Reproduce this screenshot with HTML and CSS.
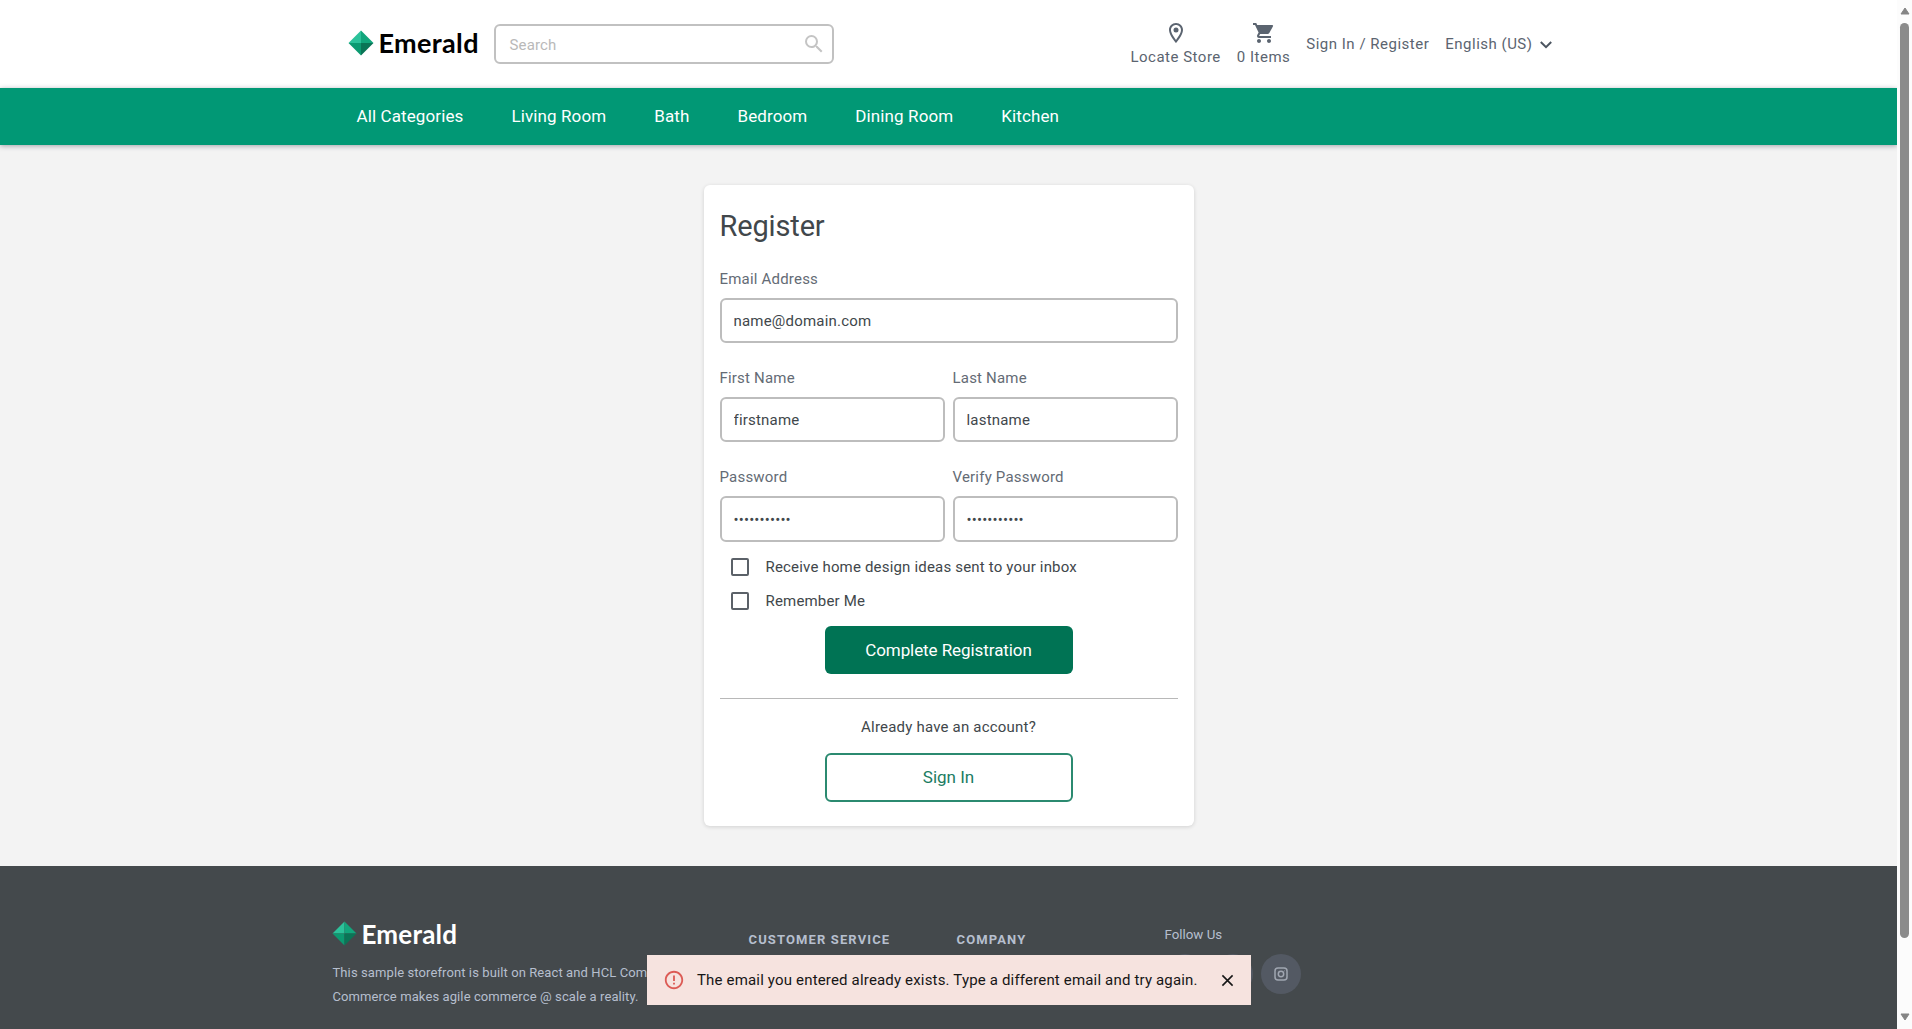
FILE: index.html
```html
<!DOCTYPE html>
<html lang="en">
<head>
<meta charset="utf-8">
<title>Register - Emerald</title>
<link rel="stylesheet" href="styles.css">
</head>
<body>
<div class="viewport">
  <div class="page">
    <header class="header">
      <div class="header-inner">
        <a class="logo">
          <svg class="gem" viewBox="0 0 26 26"><path fill="#2cc29a" d="M13 0.5V13H0.5Z"/><path fill="#12a67c" d="M13 0.5V13H25.5Z"/><path fill="#0c9a71" d="M0.5 13H13V25.5Z"/><path fill="#0a7556" d="M25.5 13H13V25.5Z"/></svg>
          <span class="wordmark">Emerald</span>
        </a>
        <div class="search">
          <span>Search</span>
          <svg class="icon" viewBox="0 0 24 24"><path d="M15.5 14h-.79l-.28-.27A6.471 6.471 0 0 0 16 9.5 6.5 6.5 0 1 0 9.5 16c1.61 0 3.09-.59 4.23-1.57l.27.28v.79l5 4.99L20.49 19l-4.99-5zm-6 0C7.01 14 5 11.99 5 9.5S7.01 5 9.5 5 14 7.01 14 9.5 11.99 14 9.5 14z"/></svg>
        </div>
        <div class="tools">
          <a class="tool"><svg class="icon" viewBox="0 0 24 24"><path d="M12 2C8.13 2 5 5.13 5 9c0 5.25 7 13 7 13s7-7.75 7-13c0-3.87-3.13-7-7-7zM7 9c0-2.76 2.24-5 5-5s5 2.24 5 5c0 2.88-2.88 7.19-5 9.88C9.92 16.21 7 11.85 7 9z"/><circle cx="12" cy="9" r="2.5"/></svg><span>Locate Store</span></a>
          <a class="tool"><svg class="icon" viewBox="0 0 24 24"><path d="M7 18c-1.1 0-1.99.9-1.99 2S5.9 22 7 22s2-.9 2-2-.9-2-2-2zM1 2v2h2l3.600 7.590-1.350 2.450c-.16.28-.25.61-.25.960 0 1.100.9 2 2 2h12v-2H7.420c-.14 0-.25-.11-.25-.25l.03-.12.9-1.630h7.450c.75 0 1.410-.41 1.750-1.030l3.580-6.490A1 1 0 0 0 20 4H5.210l-.94-2H1zm16 16c-1.100 0-1.990.9-1.990 2s.89 2 1.990 2 2-.9 2-2-.9-2-2-2z"/></svg><span>0 Items</span></a>
          <a class="signin">Sign In / Register</a>
          <a class="language">English (US)<svg class="chevron" viewBox="0 0 14 10"><path d="M1.800 2L7 7.200L12.200 2"/></svg></a>
        </div>
      </div>
    </header>
    <nav class="nav">
      <div class="nav-inner"><a>All Categories</a><a>Living Room</a><a>Bath</a><a>Bedroom</a><a>Dining Room</a><a>Kitchen</a></div>
    </nav>
    <main class="main">
      <form class="card">
        <h1>Register</h1>
        <div class="fields">
          <label class="field wide"><span>Email Address</span><input type="text" value="name@domain.com"></label>
          <label class="field"><span>First Name</span><input type="text" value="firstname"></label>
          <label class="field"><span>Last Name</span><input type="text" value="lastname"></label>
          <label class="field"><span>Password</span><input class="secret" type="password" value="password123"></label>
          <label class="field"><span>Verify Password</span><input class="secret" type="password" value="password123"></label>
        </div>
        <div class="checks">
          <label class="check"><span class="box"></span>Receive home design ideas sent to your inbox</label>
          <label class="check"><span class="box"></span>Remember Me</label>
        </div>
        <button class="button primary" type="button">Complete Registration</button>
        <hr>
        <p class="account">Already have an account?</p>
        <button class="button outline" type="button">Sign In</button>
      </form>
    </main>
    <footer class="footer">
      <div class="footer-inner">
        <div class="about">
          <a class="logo light">
            <svg class="gem" viewBox="0 0 26 26"><path fill="#2cc29a" d="M13 0.5V13H0.5Z"/><path fill="#12a67c" d="M13 0.5V13H25.5Z"/><path fill="#0c9a71" d="M0.5 13H13V25.5Z"/><path fill="#0a7556" d="M25.5 13H13V25.5Z"/></svg>
            <span class="wordmark">Emerald</span>
          </a>
          <p>This sample storefront is built on React and HCL Commerce.<br>Commerce makes agile commerce @ scale a reality.</p>
        </div>
        <h2>Customer Service</h2>
        <h2>Company</h2>
        <div class="follow">
          <span>Follow Us</span>
          <div class="social">
            <a></a><a></a>
            <a><svg viewBox="0 0 14 14"><rect x="1" y="1" width="12" height="12" rx="3"/><circle cx="7" cy="7" r="2.700"/><path d="M10.200 3.700h.4"/></svg></a>
          </div>
        </div>
      </div>
    </footer>
  </div>
  <div class="scrollbar">
    <svg viewBox="0 0 10 8"><path d="M5 1L9 7H1Z"/></svg>
    <div class="thumb"></div>
    <svg class="down" viewBox="0 0 10 8"><path d="M1 1H9L5 7Z"/></svg>
  </div>
  <div class="toast">
    <svg class="alert" viewBox="0 0 24 24"><path d="M11 15h2v2h-2zm0-8h2v6h-2zm.99-5C6.470 2 2 6.480 2 12s4.470 10 9.990 10C17.520 22 22 17.520 22 12S17.520 2 11.990 2zM12 20c-4.420 0-8-3.580-8-8s3.580-8 8-8 8 3.580 8 8-3.580 8-8 8z"/></svg>
    <span>The email you entered already exists. Type a different email and try again.</span>
    <svg class="close" viewBox="0 0 14 14"><path d="M1.500 1.500L12.500 12.500M12.500 1.500L1.500 12.500"/></svg>
  </div>
</div>
</body>
</html>
```
FILE: styles.css
```css
* { box-sizing: border-box; }
body { margin: 0; font-family: Roboto, sans-serif; font-size: 15px; color: #41474b; overflow: hidden; }
h1, h2, p { margin: 0; font-weight: 400; }
.viewport { position: relative; display: flex; width: 1912px; height: 1029px; overflow: hidden; }
.page { width: 1897px; height: 1029px; background: #f3f3f3; overflow: hidden; }

.header { height: 88px; background: #fff; color: #5b6470; }
.header-inner { width: 1232px; margin: 0 auto; padding: 0 12px 0 16px; display: flex; align-items: center; height: 88px; }
.logo { display: flex; align-items: center; gap: 5px; width: 145px; height: 30px; }
.gem { width: 26px; height: 26px; flex: none; margin: -3px 0 0 -1px; }
.wordmark { font: 700 27px/30px Lato, sans-serif; color: #000; letter-spacing: 0.35px; margin-top: -2px; }
.search { width: 340px; height: 40px; border: 2px solid #c1c1c1; border-radius: 6px; display: flex; align-items: center; justify-content: space-between; padding: 1px 6px 0 14px; color: #b9b9b9; letter-spacing: 0.15px; }
.icon { width: 24px; height: 24px; fill: #5b6470; display: block; }
.search .icon { fill: #c4c4c4; margin-top: -2px; }
.tools { margin-left: auto; display: flex; align-items: center; gap: 16px; letter-spacing: 0.5px; }
.tool { display: flex; flex-direction: column; align-items: center; gap: 3px; line-height: 18px; }
.tool .icon { margin-top: -2px; }
.language { display: flex; align-items: center; gap: 6px; }
.chevron { width: 14px; height: 10px; fill: none; stroke: #4c5560; stroke-width: 2; margin-top: 2px; }

.nav { position: relative; height: 57px; background: #019875; box-shadow: 0 1px 5px rgba(40, 40, 60, .4); }
.nav-inner { width: 1232px; margin: 0 auto; padding-left: 24px; display: flex; gap: 48px; color: #fff; font-size: 17px; letter-spacing: 0.11px; line-height: 57px; }

.main { height: 721px; padding-top: 40px; }
.card { width: 490px; height: 641px; margin: 0 auto; padding: 20px 16px 0; background: #fff; border-radius: 6px; box-shadow: 0 1px 4px rgba(0, 0, 0, .14); }
h1 { font-size: 29px; line-height: 42px; letter-spacing: -0.15px; }
.fields { display: grid; grid-template-columns: 1fr 1fr; gap: 25px 8px; margin-top: 22px; }
.field { display: block; }
.field.wide { grid-column: 1 / -1; }
.field span { display: block; height: 29px; line-height: 18px; color: #646b75; padding-top: 1px; letter-spacing: 0.2px; }
.field input { display: block; width: 100%; height: 45px; border: 2px solid #bdbdbd; border-radius: 6px; background: #fff; padding: 0 12px; font: 15px Roboto, sans-serif; letter-spacing: 0.2px; color: #41474b; outline: 0; }
.field .secret { height: 46px; padding-top: 2px; letter-spacing: 0.15px; }
.checks { padding: 8px 0 0 11px; }
.check { display: flex; align-items: center; height: 34px; gap: 17px; letter-spacing: 0.18px; }
.box { width: 18px; height: 18px; border: 2px solid #5b6168; border-radius: 2px; }
.button { display: block; width: 248px; height: 48px; margin: 8px auto 0; border-radius: 6px; font: 17px Roboto, sans-serif; padding: 0; }
.primary { background: #007354; color: #fff; border: 0; letter-spacing: -0.07px; }
hr { border: 0; height: 1px; background: #b8b8b8; margin: 24px 0 0; }
.account { text-align: center; line-height: 18px; margin-top: 19px; letter-spacing: 0.2px; }
.outline { background: #fff; color: #1b7c62; border: 2px solid #2b8a70; margin-top: 17px; height: 49px; padding-bottom: 1px; }

.footer { height: 163px; background: #44494c; color: #b6bfce; }
.footer-inner { width: 1232px; margin: 0 auto; display: grid; grid-template-columns: 416px 208px 208px 1fr; padding-top: 54px; }
.light .gem { width: 25px; height: 25px; }
.light .wordmark { color: #fff; font-size: 26px; letter-spacing: 0.2px; }
.about p { font-size: 13px; line-height: 24px; margin-top: 11px; white-space: nowrap; letter-spacing: 0.1px; }
h2 { font-size: 13px; line-height: 18px; font-weight: 700; text-transform: uppercase; letter-spacing: 1.12px; margin-top: 11px; }
.follow { font-size: 13.300px; line-height: 18px; padding-top: 6px; }
.social { display: flex; gap: 8px; margin-top: 10px; }
.social a { width: 40px; height: 40px; border-radius: 50%; background: #535963; display: flex; align-items: center; justify-content: center; }
.social svg { width: 14px; height: 14px; fill: none; stroke: #a0a6b1; stroke-width: 1.500; }

.scrollbar { width: 15px; height: 1029px; background: #fcfcfc; display: flex; flex-direction: column; align-items: center; padding-top: 7px; }
.scrollbar svg { width: 10px; height: 8px; fill: #858585; stroke: #858585; stroke-linejoin: round; }
.thumb { width: 9px; height: 915px; margin-top: 8px; border-radius: 5px; background: #8b8b8b; }
.scrollbar .down { margin-top: 75px; }

.toast { position: absolute; left: 647px; top: 955px; width: 604px; height: 50px; background: #f6e3df; color: #161616; display: flex; align-items: center; padding: 0 17px 0 16px; letter-spacing: 0.17px; }
.alert { width: 22px; height: 22px; fill: #dc5b55; margin-right: 12px; }
.close { width: 13px; height: 13px; margin-left: auto; fill: none; stroke: #161616; stroke-width: 1.700; }
```
